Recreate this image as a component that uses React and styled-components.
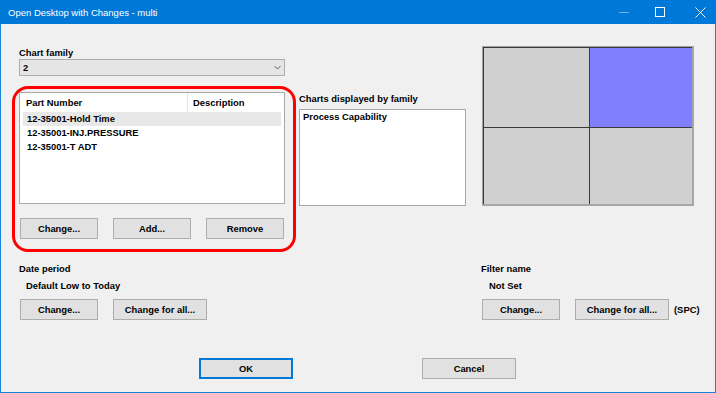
import React from "react";
import styled, { createGlobalStyle } from "styled-components";

const GlobalStyle = createGlobalStyle`
	html, body {
		margin: 0;
		padding: 0;
		background: #f0f0f0;
	}
	body {
		font-family: "Liberation Sans", Arial, sans-serif;
	}
`;

const parts = [
	{ number: "12-35001-Hold Time", selected: true },
	{ number: "12-35001-INJ.PRESSURE" },
	{ number: "12-35001-T ADT" },
];

const previewCells = ["#d0d0d0", "#8080ff", "#d0d0d0", "#d0d0d0"];

export default function App() {
	return (
		<Window>
			<GlobalStyle />
			<TitleBar>
				<Title>Open Desktop with Changes - multi</Title>
				<Controls>
					<ControlIcon width="10" height="10" viewBox="0 0 10 10" $left={0}>
						<path d="M0 5.5 H10" stroke="#6fb0ea" strokeWidth="1" />
					</ControlIcon>
					<ControlIcon width="10" height="10" viewBox="0 0 10 10" $left={26}>
						<rect x="0.5" y="0.5" width="9" height="9" fill="none" stroke="#fff" strokeWidth="1" />
					</ControlIcon>
					<ControlIcon width="11" height="11" viewBox="0 0 11 11" $left={30}>
						<path d="M0.5 0.5 L10.5 10.5 M10.5 0.5 L0.5 10.5" stroke="#fff" strokeWidth="1" />
					</ControlIcon>
				</Controls>
			</TitleBar>

			<Content>
				<TopRow>
					<LeftCol>
						<FieldLabel $indent={7} style={{ marginTop: 23 }}>Chart family</FieldLabel>
						<Dropdown>
							<span>2</span>
							<svg width="7" height="5" viewBox="0 0 7 5">
								<path d="M0.5 1 L3.5 4 L6.5 1" fill="none" stroke="#606060" strokeWidth="1" />
							</svg>
						</Dropdown>
						<HighlightBox>
							<ListBox>
								<ListHeader>
									<HeaderCell $width={168} $indent={6}>Part Number</HeaderCell>
									<HeaderCell $indent={5}>Description</HeaderCell>
								</ListHeader>
								{parts.map((p) => (
									<ListRow key={p.number} $selected={p.selected}>{p.number}</ListRow>
								))}
							</ListBox>
							<ButtonRow $top={14}>
								<Button $width={78}>Change...</Button>
								<Button $width={78}>Add...</Button>
								<Button $width={78}>Remove</Button>
							</ButtonRow>
						</HighlightBox>
					</LeftCol>

					<MiddleCol>
						<FieldLabel>Charts displayed by family</FieldLabel>
						<ChartList>Process Capability</ChartList>
					</MiddleCol>

					<PreviewGrid>
						{previewCells.map((c, i) => (
							<PreviewCell key={i} $color={c} />
						))}
					</PreviewGrid>
				</TopRow>

				<BottomRow>
					<Group $width={462}>
						<FieldLabel>Date period</FieldLabel>
						<FieldValue $indent={7}>Default Low to Today</FieldValue>
						<ButtonRow $top={7}>
							<Button $width={78}>Change...</Button>
							<Button $width={94}>Change for all...</Button>
						</ButtonRow>
					</Group>
					<Group>
						<FieldLabel>Filter name</FieldLabel>
						<FieldValue $indent={8}>Not Set</FieldValue>
						<ButtonRow $top={7}>
							<Button $width={78}>Change...</Button>
							<Button $width={94}>Change for all...</Button>
							<SideNote>(SPC)</SideNote>
						</ButtonRow>
					</Group>
				</BottomRow>

				<Footer>
					<Button $width={94} $default>OK</Button>
					<Button $width={94}>Cancel</Button>
				</Footer>
			</Content>
		</Window>
	);
}

const Window = styled.div`
	width: 716px;
	height: 393px;
	display: flex;
	flex-direction: column;
	overflow: hidden;
	background: #f0f0f0;
	color: #000;
`;

const TitleBar = styled.div`
	height: 24px;
	flex: none;
	display: flex;
	align-items: center;
	background: #0078d7;
	color: #fff;
	padding-left: 8px;
	box-sizing: border-box;
`;

const Title = styled.span`
	font-family: "Liberation Sans", Arial, sans-serif;
	font-size: 9.5px;
	line-height: 12px;
	margin-top: 1px;
`;

const Controls = styled.div`
	margin-left: auto;
	display: flex;
	align-items: center;
	padding-right: 10px;
`;

const ControlIcon = styled.svg`
	display: block;
	margin-left: ${(p) => p.$left}px;
`;

const Content = styled.div`
	flex: 1;
	display: flex;
	flex-direction: column;
	border: 1px solid #1883d7;
	border-top: none;
	font-size: 9.4px;
	font-weight: bold;
`;

const TopRow = styled.div`
	display: flex;
	align-items: flex-start;
	padding-left: 11px;
`;

const LeftCol = styled.div`
	width: 284px;
	display: flex;
	flex-direction: column;
`;

const FieldLabel = styled.div`
	line-height: 12px;
	padding-left: ${(p) => p.$indent || 0}px;
	white-space: nowrap;
`;

const FieldValue = styled(FieldLabel)`
	margin-top: 5px;
`;

const Dropdown = styled.div`
	margin-left: 7px;
	width: 266px;
	height: 17px;
	box-sizing: border-box;
	border: 1px solid #adadad;
	background: #e5e5e5;
	display: flex;
	align-items: center;
	justify-content: space-between;
	padding: 0 3px 0 3px;
	line-height: 12px;

	svg {
		display: block;
	}
`;

const HighlightBox = styled.div`
	margin-top: 10px;
	height: 166px;
	box-sizing: border-box;
	border: 3px solid #ff0000;
	border-radius: 16px;
	padding: 3px 0 0 4px;
`;

const ListBox = styled.div`
	width: 266px;
	height: 112px;
	box-sizing: border-box;
	border: 1px solid #a9a9a9;
	background: #fff;
`;

const ListHeader = styled.div`
	display: flex;
	height: 19px;
`;

const HeaderCell = styled.div`
	width: ${(p) => (p.$width ? `${p.$width}px` : "auto")};
	flex: ${(p) => (p.$width ? "none" : 1)};
	box-sizing: border-box;
	padding-left: ${(p) => p.$indent}px;
	line-height: 19px;
	border-right: ${(p) => (p.$width ? "1px solid #e5e5e5" : "none")};
`;

const ListRow = styled.div`
	margin: 0 3px;
	height: 14px;
	line-height: 14px;
	padding-left: 4px;
	background: ${(p) => (p.$selected ? "#e8e8e8" : "transparent")};
`;

const ButtonRow = styled.div`
	display: flex;
	align-items: center;
	gap: 15px;
	margin-top: ${(p) => p.$top}px;
	padding-left: 1px;
`;

const Button = styled.button`
	width: ${(p) => p.$width}px;
	height: 21px;
	box-sizing: border-box;
	padding: 0;
	border: ${(p) => (p.$default ? "2px solid #0078d7" : "1px solid #adadad")};
	background: #e1e1e1;
	color: #000;
	font-family: "Liberation Sans", Arial, sans-serif;
	font-size: 9.4px;
	font-weight: bold;
	white-space: nowrap;
`;

const MiddleCol = styled.div`
	margin-left: 3px;
	margin-top: 69px;
	width: 167px;
	display: flex;
	flex-direction: column;
`;

const ChartList = styled.div`
	margin-top: 4px;
	height: 97px;
	box-sizing: border-box;
	border: 1px solid #a9a9a9;
	background: #fff;
	padding: 1px 3px;
	line-height: 12px;
`;

const PreviewGrid = styled.div`
	margin-left: 16px;
	margin-top: 22px;
	width: 212px;
	height: 160px;
	box-sizing: border-box;
	display: grid;
	grid-template-columns: 105px 1fr;
	grid-template-rows: 79px 1fr;
	gap: 1px;
	padding: 1px 0 0 1px;
	background: #3a3a3a;
	border-style: solid;
	border-width: 1px 2px 2px 1px;
	border-color: #a0a0a0 #a6a6a6 #a6a6a6 #a0a0a0;
`;

const PreviewCell = styled.div`
	background: ${(p) => p.$color};
`;

const BottomRow = styled.div`
	display: flex;
	margin-top: 11px;
	padding-left: 18px;
`;

const Group = styled.div`
	width: ${(p) => (p.$width ? `${p.$width}px` : "auto")};
	display: flex;
	flex-direction: column;
`;

const SideNote = styled.span`
	margin-left: -10px;
	line-height: 12px;
`;

const Footer = styled.div`
	display: flex;
	gap: 129px;
	margin-top: 38px;
	padding-left: 198px;
`;
